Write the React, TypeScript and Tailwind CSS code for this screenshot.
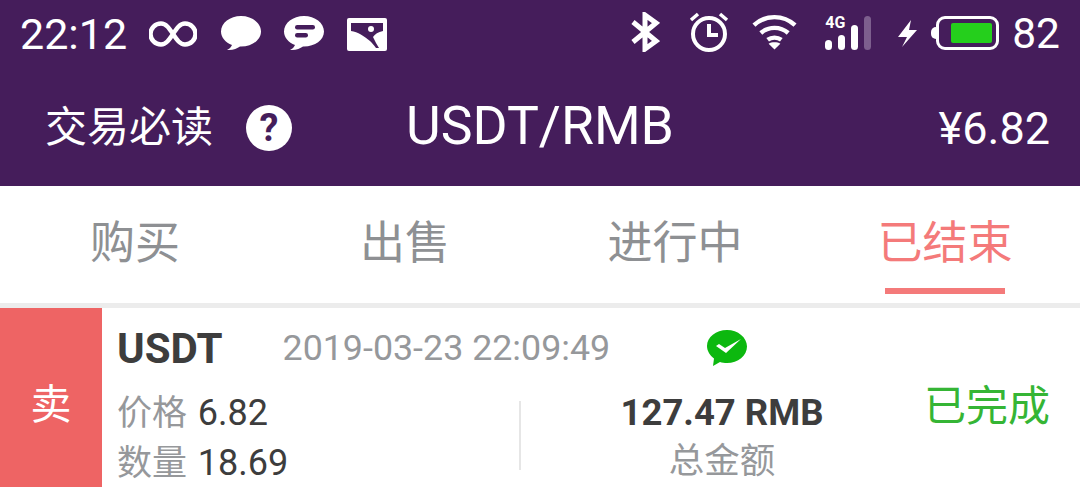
const cjk = { fontFamily: 'Roboto, "Noto Sans CJK SC", sans-serif' };

function StatusIcons() {
  return (
    <div className="flex items-center">
      <svg className="ml-[22px]" width="48" height="26" viewBox="0 0 48 26" fill="none" stroke="white" strokeWidth="4.500">
        <path d="M24 13c-4-6-7-10.500-12-10.500a10.500 10.500 0 0 0 0 21c5 0 8-4.500 12-10.500s7-10.500 12-10.500a10.500 10.500 0 0 1 0 21c-5 0-8-4.500-12-10.500z" />
      </svg>
      <svg className="ml-[24px] mt-[-2px]" width="40" height="36" viewBox="0 0 40 36" fill="white">
        <path d="M20 1C9 1 0 8 0 16.500c0 6 4.500 11 11 13.500-1 2-2.500 4-5 5 6 .5 10-1.500 13-3.500h1c11 0 20-6.500 20-15S31 1 20 1z" />
      </svg>
      <svg className="ml-[23px] mt-[-2px]" width="40" height="36" viewBox="0 0 40 36" fill="white">
        <path d="M20 1C9 1 0 8 0 16.500c0 6 4.500 11 11 13.500-1 2-2.500 4-5 5 6 .5 10-1.500 13-3.500h1c11 0 20-6.500 20-15S31 1 20 1z" />
        <rect x="11" y="10" width="20" height="4.500" rx="2.200" fill="#451d5b" />
        <rect x="11" y="18" width="13" height="4.500" rx="2.200" fill="#451d5b" />
      </svg>
      <svg className="ml-[23px]" width="40" height="33" viewBox="0 0 40 33" fill="white">
        <rect width="40" height="33" rx="2" />
        <path d="M4 5H36V13C31 14 28 16 26 19C28 23 30 27 32 30H29C27 27 25 25 23 23C17 18 11 14 4 13Z" fill="#451d5b" />
        <circle cx="24" cy="11" r="3" />
      </svg>
    </div>
  );
}

function SystemIcons() {
  return (
    <div className="mt-[-2px] flex items-center">
      <svg className="mt-[-2px]" width="29" height="40" viewBox="0 0 29 40" fill="none" stroke="white" strokeWidth="5">
        <path d="M2 10L25 29L14 37V3L25 11L2 30" />
      </svg>
      <svg className="ml-[29px] mt-[-2px]" width="40" height="40" viewBox="0 0 40 40" fill="none" stroke="white">
        <circle cx="20" cy="22" r="16" strokeWidth="4" />
        <path d="M20 12v11h9" strokeWidth="4" />
        <path d="M2 8l7-6M38 8l-7-6" strokeWidth="3.500" />
      </svg>
      <svg className="ml-[23px] mt-[-2px]" width="45" height="38" viewBox="0 0 46 38" fill="none" stroke="white" strokeWidth="4.500">
        <path d="M2 12c12-11 30-11 42 0" />
        <path d="M9 20c8-7 20-7 28 0" />
        <path d="M16 27c4-3 10-3 14 0" />
        <path d="M23 37l-6-6c3-2 9-2 12 0z" fill="white" stroke="none" />
      </svg>
      <div className="relative ml-[28px] h-[34px] w-[46px]">
        <span className="absolute left-0 top-[-1px] text-[16px] font-bold leading-[16px] text-white">4G</span>
        <svg width="46" height="34" viewBox="0 0 46 34" fill="white">
          <rect x="0" y="24" width="7" height="10" rx="3.500" />
          <rect x="13" y="19" width="7" height="15" rx="3.500" />
          <rect x="26" y="9" width="7" height="25" rx="3.500" />
          <rect x="39" y="0" width="7" height="34" rx="3.500" fill="#7d5f8e" />
        </svg>
      </div>
      <svg className="ml-[27px] mt-[1px]" width="19" height="27" viewBox="0 0 19 27" fill="white">
        <path d="M13 0L0 17h9L4 27 19 10h-8z" />
      </svg>
      <div className="ml-[14px] flex items-center">
        <div className="h-[12px] w-[5px] rounded-l-full bg-white" />
        <div className="flex h-[34px] w-[63px] items-center rounded-[9px] border-[3px] border-white pl-[12px]">
          <div className="h-[20px] w-[41px] rounded-[2px] bg-[#25cf1c]" />
        </div>
      </div>
    </div>
  );
}

function Header() {
  return (
    <div className="bg-[#451d5b] text-white">
      <div className="flex h-[70px] items-center justify-between pb-[2px] pl-[20px] pr-[20px]">
        <div className="flex items-center">
          <span className="text-[43px] leading-none">22:12</span>
          <StatusIcons />
        </div>
        <div className="flex items-center">
          <SystemIcons />
          <span className="ml-[13px] text-[42.500px] leading-none">82</span>
        </div>
      </div>
      <div className="relative flex h-[116px] items-center justify-center pb-[1px]">
        <div className="absolute left-[45px] top-[34px] flex items-center">
          <span className="text-[42px] leading-[48px]">交易必读</span>
          <span className="ml-[33px] flex h-[46px] w-[46px] items-center justify-center rounded-full bg-white text-[38px] font-bold leading-none text-[#451d5b]">?</span>
        </div>
        <span className="mt-[-3px] text-[53.500px] leading-none">USDT/RMB</span>
        <span className="absolute right-[30px] top-[36px] text-[45px] leading-none">¥6.82</span>
      </div>
    </div>
  );
}

function Tabs() {
  const tabs = ["购买", "出售", "进行中", "已结束"];
  return (
    <div className="grid h-[122px] grid-cols-4 border-b-[5px] border-[#ececec] bg-white">
      {tabs.map((tab, i) => (
        <div key={tab} className="relative flex items-start justify-center pt-[28px]">
          <span className={`text-[45px] leading-[60px] ${i === 3 ? "text-[#f47a7a]" : "text-[#8e9093]"}`}>{tab}</span>
          {i === 3 && <div className="absolute bottom-[9px] left-[75px] h-[6px] w-[120px] bg-[#f47a7a]" />}
        </div>
      ))}
    </div>
  );
}

function OrderRow() {
  return (
    <div className="flex h-[179px] bg-white">
      <div className="flex w-[102px] items-center justify-center bg-[#ee6464] pt-[16px] text-[41px] text-white">卖</div>
      <div className="flex-1 pl-[15px] pt-[17px]">
        <div className="flex h-[48px] items-center">
          <span className="text-[42px] font-bold leading-none text-[#3d3d3d]">USDT</span>
          <span className="ml-[60px] text-[35.800px] leading-none text-[#96989b]">2019-03-23 22:09:49</span>
          <svg className="ml-[96px] mt-[-2px]" width="42" height="38" viewBox="0 0 42 38" fill="#0cb80f">
            <path d="M21 1C10 1 1 8 1 17c0 5 3 9.500 7 12.500L7 37l7-4c2 .7 4.500 1 7 1 11 0 20-7.500 20-16.500S32 1 21 1z" />
            <path d="M10 17l3-2 6 4L35 10 20 24z" fill="white" />
          </svg>
        </div>
        <div className="mt-[17px] flex">
          <div className="w-[402px] text-[35px] leading-[46px] text-[#3d3d3d]">
            <div><span className="text-[#96989b]">价格</span> <span className="ml-[2px] text-[36px]">6.82</span></div>
            <div className="mt-[3px]"><span className="text-[#96989b]">数量</span> <span className="ml-[2px] text-[36px]">18.69</span></div>
          </div>
          <div className="mt-[11px] h-[69px] w-[2px] bg-[#e6e6e6]" />
          <div className="w-[402px] text-center leading-[46px]">
            <div className="text-[36.500px] font-bold text-[#3d3d3d]">127.47 RMB</div>
            <div className="mt-[2px] text-[35.500px] text-[#96989b]">总金额</div>
          </div>
          <span className="ml-[1px] mt-[-8px] h-[50px] whitespace-nowrap text-[42px] leading-[50px] text-[#35b535]">已完成</span>
        </div>
      </div>
    </div>
  );
}

export default function App() {
  return (
    <div className="h-[487px] w-[1080px] overflow-hidden bg-white" style={cjk}>
      <Header />
      <Tabs />
      <OrderRow />
    </div>
  );
}
